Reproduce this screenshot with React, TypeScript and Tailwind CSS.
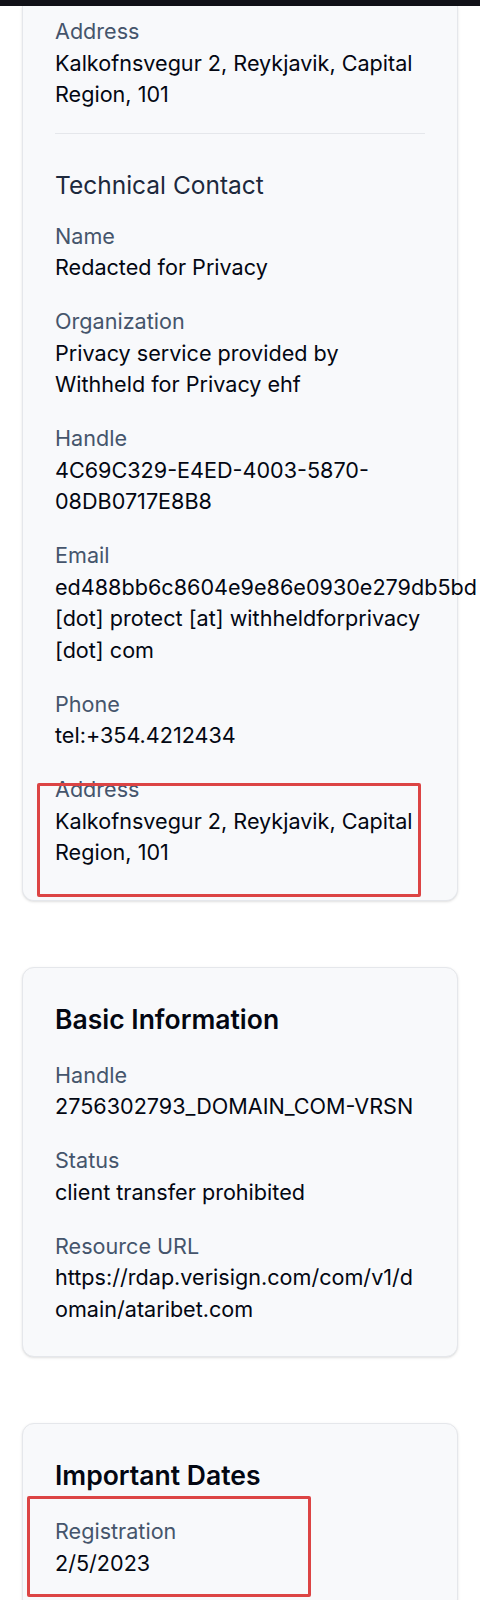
const font = { fontFamily: "Inter, 'Noto Sans', sans-serif" }

type FieldProps = { label: string; value: string; wrap?: 'normal' | 'all' }

function Field({ label, value, wrap = 'normal' }: FieldProps) {
  return (
    <div className="text-[21.6px] leading-[31.5px]">
      <div className="text-slate-600">{label}</div>
      <div className={wrap === 'all' ? 'break-all text-gray-950' : 'text-gray-950'}>{value}</div>
    </div>
  )
}

function Card({ children, className = '' }: { children: React.ReactNode; className?: string }) {
  return (
    <div className={`border border-gray-200 bg-[#f8f9fb] px-8 shadow-sm ${className}`}>{children}</div>
  )
}

export default function App() {
  return (
    <div className="relative min-h-[1600px] overflow-hidden bg-white" style={font}>
      <div className="h-[6px] bg-[#111118]" />
      <div className="px-[22px]">
        <Card className="rounded-b-xl border-t-0 pt-[10px] pb-[31px]">
          <Field label="Address" value="Kalkofnsvegur 2, Reykjavik, Capital Region, 101" />
          <div className="mt-[22px] h-px bg-gray-200" />
          <h3 className="mt-[35px] text-[24.5px] leading-8 text-slate-800">Technical Contact</h3>
          <div className="mt-5 flex flex-col gap-[22.5px]">
            <Field label="Name" value="Redacted for Privacy" />
            <Field label="Organization" value="Privacy service provided by Withheld for Privacy ehf" />
            <Field label="Handle" value="4C69C329-E4ED-4003-5870-08DB0717E8B8" />
            <Field label="Email" value="ed488bb6c8604e9e86e0930e279db5bd [dot] protect [at] withheldforprivacy [dot] com" />
            <Field label="Phone" value="tel:+354.4212434" />
            <Field label="Address" value="Kalkofnsvegur 2, Reykjavik, Capital Region, 101" />
          </div>
        </Card>

        <Card className="mt-[66px] rounded-xl pt-[35px] pb-[31px]">
          <h2 className="text-[26.5px] leading-8 font-semibold text-gray-950">Basic Information</h2>
          <div className="mt-[25px] flex flex-col gap-[22.5px]">
            <Field label="Handle" value="2756302793_DOMAIN_COM-VRSN" />
            <Field label="Status" value="client transfer prohibited" />
            <Field label="Resource URL" value="https://rdap.verisign.com/com/v1/domain/ataribet.com" wrap="all" />
          </div>
        </Card>

        <Card className="mt-[66px] rounded-xl pt-[35px] pb-[31px]">
          <h2 className="text-[26.5px] leading-8 font-semibold text-gray-950">Important Dates</h2>
          <div className="mt-[25px] flex flex-col gap-[22.5px]">
            <Field label="Registration" value="2/5/2023" />
          </div>
        </Card>
      </div>

      <div className="pointer-events-none absolute top-[783px] left-[37px] h-[114px] w-[384px] rounded-[2px] border-[3px] border-[#dc4444]" />
      <div className="pointer-events-none absolute top-[1496px] left-[27px] h-[101px] w-[284px] rounded-[2px] border-[3px] border-[#dc4444]" />
    </div>
  )
}
